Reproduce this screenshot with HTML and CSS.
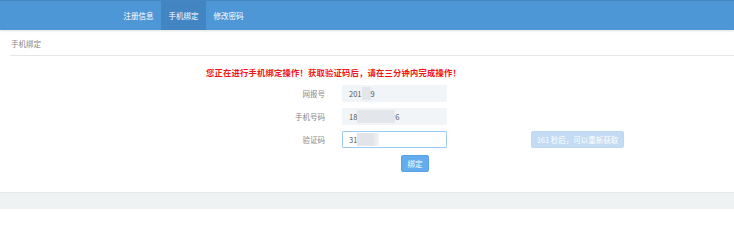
FILE: index.html
```html
<!DOCTYPE html>
<html lang="zh-CN">
<head>
<meta charset="utf-8">
<title>手机绑定</title>
<link rel="stylesheet" href="styles.css">
</head>
<body>
<header class="topbar">
  <nav class="tabs">
    <a class="tab">注册信息</a>
    <a class="tab active">手机绑定</a>
    <a class="tab">修改密码</a>
  </nav>
</header>
<main class="main">
  <div class="page-title">手机绑定</div>
  <p class="warning">您正在进行手机绑定操作！获取验证码后，请在三分钟内完成操作！</p>
  <form class="form">
    <div class="row">
      <label class="label">网报号</label>
      <div class="field filled">201<span class="blur b1"></span>9</div>
    </div>
    <div class="row">
      <label class="label">手机号码</label>
      <div class="field filled">18<span class="blur b2"></span>6</div>
    </div>
    <div class="row">
      <label class="label">验证码</label>
      <div class="field focus">31<span class="blur b3"></span></div>
      <button type="button" class="countdown">161 秒后，可以重新获取</button>
    </div>
    <div class="actions">
      <button type="button" class="submit">绑定</button>
    </div>
  </form>
</main>
<footer class="footer"></footer>
</body>
</html>
```
FILE: styles.css
```css
* { box-sizing: border-box; }
html, body { margin: 0; padding: 0; }
body {
  font-family: "Noto Sans CJK SC", "Noto Sans", "Liberation Sans", sans-serif;
  font-size: 7.5px;
  color: #666;
  background: #fff;
  width: 734px;
  height: 209px;
  display: flex;
  flex-direction: column;
}
.topbar {
  height: 30px;
  background: #4e97d7;
  border-top: 1px solid #4587c2;
  box-shadow: 0 1px 2px rgba(0,0,0,0.12);
  display: flex;
  position: relative;
  z-index: 1;
}
.tabs { display: flex; margin-left: 116px; }
.tab {
  width: 45px;
  display: flex;
  align-items: center;
  justify-content: center;
  color: #fff;
  font-size: 7.5px;
}
.tab.active { background: #4384c2; }
.main { flex: 1; }
.page-title {
  margin-left: 10px;
  height: 26px;
  padding: 8px 0 0 1px;
  line-height: 12px;
  color: #888;
  border-bottom: 1px solid #e6e6e6;
}
.warning {
  margin: 10px 0 0 206px;
  line-height: 12px;
  font-size: 8.3px;
  font-weight: bold;
  letter-spacing: 0.2px;
  color: #f21414;
}
.form {
  margin-top: 7px;
  display: flex;
  flex-direction: column;
  gap: 6px;
}
.row { display: flex; align-items: center; height: 17px; }
.label {
  width: 326px;
  text-align: right;
  color: #888;
  padding-right: 1px;
}
.field {
  margin-left: 16px;
  width: 105px;
  height: 17px;
  padding-left: 6px;
  display: flex;
  align-items: center;
  color: #555;
  background: #f2f5f8;
  border: 1px solid #f2f5f8;
  border-radius: 1px;
}
.field.focus { background: #fff; border-color: #9ec9f1; }
.blur { display: inline-block; height: 13px; background: #e3e6ea; }
.b1 { width: 9px; }
.b2 { width: 38px; }
.b3 { width: 22px; background: linear-gradient(90deg, #e1e4e8 70%, #f4f5f7); }
.countdown {
  margin-left: 84px;
  width: 93px;
  height: 17px;
  border: 1px solid #bcd8f2;
  border-radius: 2px;
  background: #c3dcf4;
  color: #fff;
  font-family: inherit;
  font-size: 7.5px;
  padding: 0;
}
.actions { padding-left: 401px; margin-top: 1px; }
.submit {
  width: 28px;
  height: 17px;
  border: 1px solid #5aa2e6;
  border-radius: 2px;
  background: #63acee;
  color: #fff;
  font-family: inherit;
  font-size: 7.5px;
  padding: 0;
}
.footer {
  height: 17px;
  background: #eef2f3;
  border-top: 1px solid #e5e9eb;
}
```
